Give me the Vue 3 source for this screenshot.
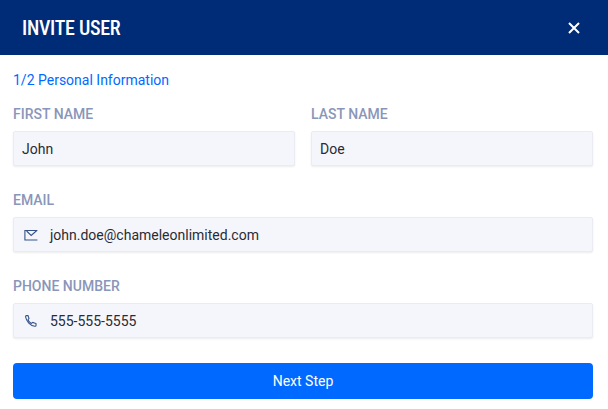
<template>
  <div class="modal">
    <header class="modal-head">
      <h1 class="modal-title">INVITE USER</h1>
      <button class="close-btn" aria-label="Close">
        <svg width="12" height="12" viewBox="0 0 12 12">
          <path d="M1 1 L11 11 M11 1 L1 11" stroke="#fff" stroke-width="2" fill="none" />
        </svg>
      </button>
    </header>

    <form class="modal-body" @submit.prevent>
      <div class="step">1/2 Personal Information</div>

      <div class="name-row">
        <div class="field">
          <label class="field-label">FIRST NAME</label>
          <div class="field-box"><span class="field-value">John</span></div>
        </div>
        <div class="field">
          <label class="field-label">LAST NAME</label>
          <div class="field-box"><span class="field-value">Doe</span></div>
        </div>
      </div>

      <div class="field">
        <label class="field-label">EMAIL</label>
        <div class="field-box">
          <svg class="field-icon" width="14" height="12" viewBox="0 0 14 12" fill="none" stroke="#35538a" stroke-width="1.1">
            <path d="M13.4 1.5 H.9 V11 H13.4" />
            <path d="M2.6 2 L7.2 6.4 L12.8 1.5" />
          </svg>
          <span class="field-value">john.doe@chameleonlimited.com</span>
        </div>
      </div>

      <div class="field">
        <label class="field-label">PHONE NUMBER</label>
        <div class="field-box">
          <svg class="field-icon" width="14" height="12" viewBox="0 0 14 12" fill="none" stroke="#35538a" stroke-width="1.1">
            <path d="M2.4 .6 L4 .6 L5 3.4 L4 4.8 C4.6 6.4 5.8 7.6 7.4 8.4 L8.8 7.4 L12 8.6 L12 10.4 C12 11 11.4 11.4 10.8 11.3 C6.2 10.6 2.4 6.4 1.6 2 C1.5 1.2 1.8 .6 2.4 .6 Z" />
          </svg>
          <span class="field-value">555-555-5555</span>
        </div>
      </div>

      <button class="next-btn" type="submit">Next Step</button>
    </form>
  </div>
</template>

<script setup>
</script>

<style>
html, body { margin: 0; background: #fff; }
</style>

<style scoped>
.modal {
  width: 608px;
  height: 409px;
  background: #fff;
  font-family: Roboto, "Liberation Sans", sans-serif;
  overflow: hidden;
}

.modal-head {
  height: 55px;
  background: #002b76;
  display: flex;
  align-items: center;
  justify-content: space-between;
  padding: 0 28px 0 22px;
}
.modal-title {
  margin: 0;
  font-size: 20px;
  font-weight: 500;
  color: #fff;
  font-stretch: condensed;
  letter-spacing: -0.3px;
}
.close-btn {
  border: none;
  background: transparent;
  padding: 0;
  display: flex;
}

.modal-body {
  padding: 17px 15px 0 13px;
  display: flex;
  flex-direction: column;
}
.step {
  font-size: 14px;
  line-height: 16px;
  color: #0069ff;
  margin-bottom: 18px;
}

.name-row {
  display: grid;
  grid-template-columns: 282px 282px;
  gap: 16px;
}
.field { margin-bottom: 26px; }
.field:last-of-type { margin-bottom: 25px; }
.field-label {
  display: block;
  font-size: 14px;
  line-height: 16px;
  font-weight: 500;
  color: #8a96b8;
  margin-bottom: 9px;
}
.field-box {
  height: 35px;
  box-sizing: border-box;
  background: #f5f6fb;
  border: 1px solid #ebecf3;
  border-radius: 2px;
  box-shadow: 0 1px 2px rgba(0, 0, 0, 0.08);
  display: flex;
  align-items: center;
  padding: 0 8px;
}
.field-value {
  font-size: 14px;
  color: #2b2b33;
}
.field-icon {
  margin: 0 12px 0 2px;
  flex: none;
}

.next-btn {
  height: 36px;
  border: none;
  border-radius: 4px;
  background: #0069ff;
  color: #fff;
  font-family: inherit;
  font-size: 14px;
}
</style>
